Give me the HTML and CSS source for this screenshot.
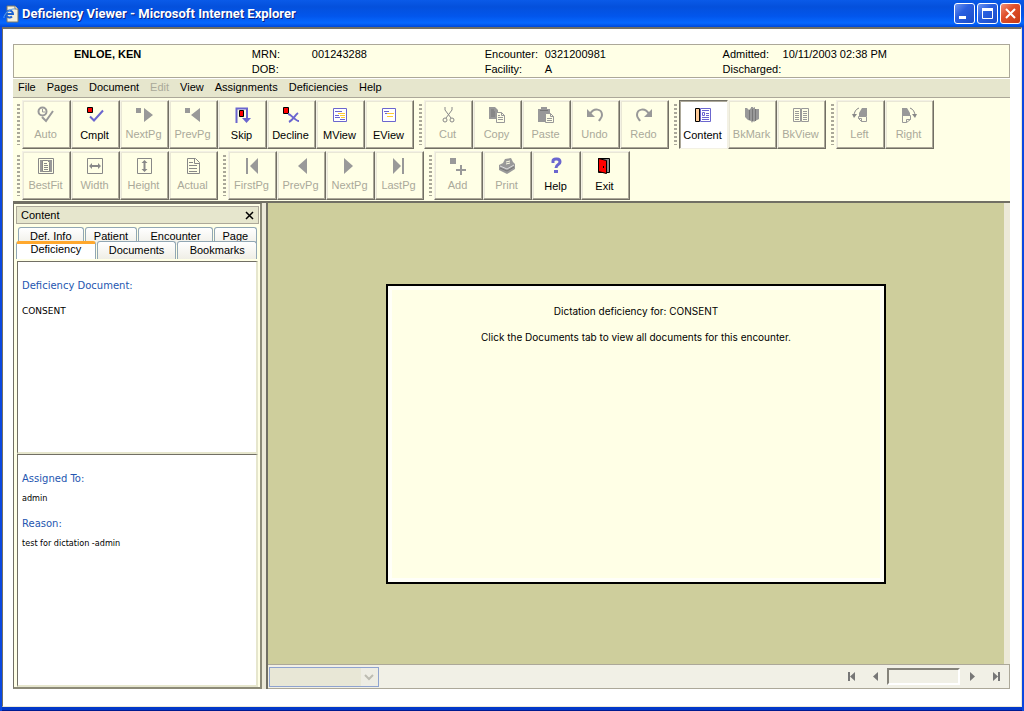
FILE: index.html
```html
<!DOCTYPE html>
<html lang="en">
<head>
    <meta charset="UTF-8">
    <meta name="viewport" content="width=device-width, initial-scale=1.0">
    <title>Deficiency Viewer</title>
    <link rel="stylesheet" href="styles.css">
</head>
<body>

    <!-- Title Bar -->
    <header class="titlebar">
        <svg class="app-icon" width="16" height="18" viewBox="0 0 16 18">
            <path d="M4 1h8l3 3v13H4z" fill="#f4f0dc" stroke="#7d7868"/>
            <path d="M12 1v3h3" fill="#fff" stroke="#7d7868"/>
            <path d="M3 9h7a3.500 3.500 0 1 0-1 2.500" fill="none" stroke="#1c62d0" stroke-width="2"/>
            <path d="M1 13C0 10 7 3 12 4" fill="none" stroke="#5ba0ee"/>
        </svg>
        <h1>Deficiency Viewer - Microsoft Internet Explorer</h1>
        <div class="window-buttons">
            <button class="win-btn" aria-label="Minimize"><svg width="19" height="19"><path d="M4 12h7v3H4z" fill="#fff"/></svg></button>
            <button class="win-btn" aria-label="Maximize"><svg width="19" height="19"><path d="M4.500 4v10.500h10V4" fill="none" stroke="#fff"/><path d="M4 4h11v3H4z" fill="#fff"/></svg></button>
            <button class="win-btn win-close" aria-label="Close"><svg width="19" height="19"><path d="M5 5l9 9M14 5l-9 9" stroke="#fff" stroke-width="2"/></svg></button>
        </div>
    </header>

    <div class="window-body">

        <!-- Patient Info -->
        <section class="patient">
            <strong class="patient-name">ENLOE, KEN</strong>
            <dl>
                <dt>MRN:</dt><dd>001243288</dd>
                <dt>DOB:</dt><dd></dd>
            </dl>
            <dl>
                <dt>Encounter:</dt><dd>0321200981</dd>
                <dt>Facility:</dt><dd>A</dd>
            </dl>
            <dl>
                <dt>Admitted:</dt><dd>10/11/2003 02:38 PM</dd>
                <dt>Discharged:</dt><dd></dd>
            </dl>
        </section>

        <!-- Menu -->
        <nav class="menu">
            <button>File</button>
            <button>Pages</button>
            <button>Document</button>
            <button disabled>Edit</button>
            <button>View</button>
            <button>Assignments</button>
            <button>Deficiencies</button>
            <button>Help</button>
        </nav>

        <!-- Toolbars -->
        <div class="toolbars">
            <div class="toolbar-row">
                <div class="toolbar">
                    <span class="grip"></span>
                    <button class="tool" disabled><svg class="icon" viewBox="0 0 23 22"><circle cx="7.500" cy="6.500" r="4" fill="none" stroke="#999" stroke-width="2"/><path d="M7.500 4v3H10" fill="none" stroke="#999"/><path d="M7 12l4 4 7-10" fill="none" stroke="#999" stroke-width="2"/></svg>Auto</button>
                    <button class="tool"><svg class="icon" viewBox="0 0 23 22"><path d="M3.500 2.500h5v5h-5z" fill="#f00" stroke="#000"/><path d="M6 11.500l4 4 9-10" fill="none" stroke="#6b66cf" stroke-width="2"/></svg>Cmplt</button>
                    <button class="tool" disabled><svg class="icon" viewBox="0 0 23 22"><path d="M3 3h5v5H3zM11 3l9 7-9 7z" fill="#999"/></svg>NextPg</button>
                    <button class="tool" disabled><svg class="icon" viewBox="0 0 23 22"><path d="M3 3h5v5H3zM18 3l-9 7 9 7z" fill="#999"/></svg>PrevPg</button>
                    <button class="tool"><svg class="icon" viewBox="0 0 23 22"><path d="M5.500 18V3.500H16V14" fill="none" stroke="#6b66cf" stroke-width="2"/><path d="M11 13h9l-4.500 5z" fill="#6b66cf"/><path d="M8.500 5.500h4v6h-4z" fill="#f00" stroke="#000"/></svg>Skip</button>
                    <button class="tool"><svg class="icon" viewBox="0 0 23 22"><path d="M3.500 2.500h5v6h-5z" fill="#f00" stroke="#000"/><path d="M8 9c3 0 7 7 11 7M18 8c-3 2-5 7-9 9" fill="none" stroke="#6b66cf" stroke-width="2"/></svg>Decline</button>
                    <button class="tool"><svg class="icon" viewBox="0 0 23 22"><path d="M4.500 3.500h13v13h-13z" fill="#fff" stroke="#6b66cf"/><path d="M6 6.500h7M6 10.500h4M6 12.500h5M11 14.500h5" stroke="#6b66cf"/><path d="M9 8.500h7M11 10.500h5M12 12.500h4" stroke="#fc3"/></svg>MView</button>
                    <button class="tool"><svg class="icon" viewBox="0 0 23 22"><path d="M4.500 3.500h13v13h-13z" fill="#fff" stroke="#6b66cf"/><path d="M6 6.500h5M7 8.500h3" stroke="#6b66cf"/><path d="M9 8.500h7M9 11.500h6" stroke="#fc3"/></svg>EView</button>
                </div>
                <div class="toolbar">
                    <span class="grip"></span>
                    <button class="tool" disabled><svg class="icon" viewBox="0 0 23 22"><path d="M8 2v3l6 8M15 2v3l-6 8" fill="none" stroke="#888"/><circle cx="8" cy="15" r="2" fill="none" stroke="#888"/><circle cx="15" cy="15" r="2" fill="none" stroke="#888"/></svg>Cut</button>
                    <button class="tool" disabled><svg class="icon" viewBox="0 0 23 22"><path d="M3 2h6l3 3v9H3z" fill="#999"/><path d="M5 5h3M5 7h4M5 9h4M5 11h4" stroke="#777"/><path d="M10.500 7.500h5l3 3v7h-8z" fill="#ffffe6" stroke="#999"/><path d="M15.500 7.500v3h3M12 12.500h5M12 14.500h5M12 10.500h2" fill="none" stroke="#999"/></svg>Copy</button>
                    <button class="tool" disabled><svg class="icon" viewBox="0 0 23 22"><path d="M3 4h3V2h6v2h3v13H3z" fill="#999"/><path d="M5 5.500h8" stroke="#777"/><path d="M10.500 8.500h5l3 3v6h-8z" fill="#ffffe6" stroke="#999"/><path d="M15.500 8.500v3h3M12 13.500h5M12 15.500h5" fill="none" stroke="#999"/></svg>Paste</button>
                    <button class="tool" disabled><svg class="icon" viewBox="0 0 23 22"><path d="M6 9c4-7 12-5 12 1 0 3-2 4-3 6" fill="none" stroke="#999" stroke-width="2"/><path d="M3 4v8h8z" fill="#999"/></svg>Undo</button>
                    <button class="tool" disabled><svg class="icon" viewBox="0 0 23 22"><path d="M16 9C12 2 4 4 4 10c0 3 2 4 3 6" fill="none" stroke="#999" stroke-width="2"/><path d="M19 4v8h-8z" fill="#999"/></svg>Redo</button>
                </div>
                <div class="toolbar">
                    <span class="grip"></span>
                    <button class="tool pressed" aria-pressed="true"><svg class="icon" viewBox="0 0 23 22"><path d="M3.500 3.500h4v13h-4z" fill="#fc9" stroke="#000"/><path d="M8.500 3.500h10v13h-10z" fill="#fff" stroke="#6b66cf"/><path d="M10 5.500h7M14 8.500h3M14 10.500h3M10 12.500h7M10 14.500h7" stroke="#6b66cf"/><path d="M10.500 7.500h2v3h-2z" fill="none" stroke="#6b66cf"/></svg>Content</button>
                    <button class="tool" disabled><svg class="icon" viewBox="0 0 23 22"><path d="M4 3h2l2 2 2-2v-1h2v1l2-1v2h4v10l-4 2-1 1-1-1-1 2-1-2-3-1-3-3z" fill="#999"/><path d="M8.500 5v10M11.500 4v12M14.500 4v12" stroke="#777"/></svg>BkMark</button>
                    <button class="tool" disabled><svg class="icon" viewBox="0 0 23 22"><path d="M3.500 3.500h7v13h-7zM11.500 3.500h7v13h-7z" fill="none" stroke="#999"/><path d="M5 6.500h4M5 8.500h4M5 10.500h4M5 12.500h4M5 14.500h4M13 6.500h4M13 8.500h4M13 10.500h4M13 12.500h4M13 14.500h4" stroke="#999"/></svg>BkView</button>
                </div>
                <div class="toolbar">
                    <span class="grip"></span>
                    <button class="tool" disabled><svg class="icon" viewBox="0 0 23 22"><path d="M18 3v8h-8V8l3-5z" fill="#999"/><path d="M9.500 11.500h8v5h-5l-3-3zM12.500 16.500v-3h-3" fill="none" stroke="#999"/><path d="M10 3C7 4 5 7 5 11" fill="none" stroke="#888"/><path d="M3 9h5l-3 4z" fill="#888"/></svg>Left</button>
                    <button class="tool" disabled><svg class="icon" viewBox="0 0 23 22"><path d="M4 3h5l3 5v3H4z" fill="#999"/><path d="M4.500 10.500v7h4l4-3v-4zM8.500 17.500v-3h4" fill="none" stroke="#999"/><path d="M12 3c3 1 5 4 5 8" fill="none" stroke="#888"/><path d="M14 9h5l-2 4z" fill="#888"/></svg>Right</button>
                </div>
            </div>

            <div class="toolbar-row">
                <div class="toolbar">
                    <span class="grip"></span>
                    <button class="tool" disabled><svg class="icon" viewBox="0 0 23 22"><path d="M3.500 2.500h15v15h-15z" fill="none" stroke="#888"/><path d="M5 4h12v12H5z" fill="#999"/><path d="M7.500 4.500h5l2 2v9h-7z" fill="#ffffe6" stroke="#888"/><path d="M9 7.500h3M9 9.500h4M9 11.500h4M9 13.500h4" stroke="#888"/></svg>BestFit</button>
                    <button class="tool" disabled><svg class="icon" viewBox="0 0 23 22"><path d="M3.500 2.500h15v15h-15z" fill="none" stroke="#888"/><path d="M7 10h8" stroke="#888" stroke-width="2"/><path d="M5 10l3-3v6zM17 10l-3-3v6z" fill="#888"/></svg>Width</button>
                    <button class="tool" disabled><svg class="icon" viewBox="0 0 23 22"><path d="M4.500 2.500h14v15h-14z" fill="none" stroke="#888"/><path d="M11.500 6v8" stroke="#888" stroke-width="2"/><path d="M11.500 4l-3 3h6zM11.500 16l-3-3h6z" fill="#888"/></svg>Height</button>
                    <button class="tool" disabled><svg class="icon" viewBox="0 0 23 22"><path d="M5.500 2.500h8l4 4v11h-12zM12.500 2.500v5h5" fill="none" stroke="#888" stroke-width="1"/><path d="M7 6.500h4M7 9.500h8M7 12.500h8M7 15.500h8" stroke="#888"/></svg>Actual</button>
                </div>
                <div class="toolbar">
                    <span class="grip"></span>
                    <button class="tool" disabled><svg class="icon" viewBox="0 0 23 22"><path d="M5 2h2v16H5zM17 2v16l-8-8z" fill="#999"/></svg>FirstPg</button>
                    <button class="tool" disabled><svg class="icon" viewBox="0 0 23 22"><path d="M17 2v16l-9-8z" fill="#999"/></svg>PrevPg</button>
                    <button class="tool" disabled><svg class="icon" viewBox="0 0 23 22"><path d="M5 2v16l9-8z" fill="#999"/></svg>NextPg</button>
                    <button class="tool" disabled><svg class="icon" viewBox="0 0 23 22"><path d="M5 2v16l8-8zM14 2h2v16h-2z" fill="#999"/></svg>LastPg</button>
                </div>
                <div class="toolbar">
                    <span class="grip"></span>
                    <button class="tool" disabled><svg class="icon" viewBox="0 0 23 22"><path d="M3 2h6v6H3zM13 9h2v4h4v2h-4v4h-2v-4H9v-2h4z" fill="#999"/></svg>Add</button>
                    <button class="tool" disabled><svg class="icon" viewBox="0 0 23 22"><path d="M9 3l6-1 2 4 2 2v5l-8 5-8-4V9l4-2z" fill="#999"/><path d="M10 6l4-1M10 8l4-1" stroke="#ffffe6"/><path d="M4 10l7 3 7-4" fill="none" stroke="#ddd"/><path d="M4 12l7 3 7-4" fill="none" stroke="#777"/></svg>Print</button>
                    <button class="tool"><svg class="icon" viewBox="0 0 23 22"><path d="M8 7V5c0-1 1-2 3-2h1c2 0 3 1 3 3 0 3-4 2-4 6" fill="none" stroke="#6b66cf" stroke-width="3"/><path d="M9 14h4v3H9z" fill="#6b66cf"/></svg>Help</button>
                    <button class="tool"><svg class="icon" viewBox="0 0 23 22"><path d="M4.500 2.500h11v14h-11z" fill="#888" stroke="#000"/><path d="M4.500 2.500l8 2v13l-8-2z" fill="#f00" stroke="#000"/><path d="M9 10h1v2H9z" fill="#000"/></svg>Exit</button>
                </div>
            </div>
        </div>

        <main class="workspace">

            <!-- Content Panel -->
            <aside class="panel">
                <div class="panel-title">
                    <h2>Content</h2>
                    <button class="panel-close" aria-label="Close panel"><svg width="9" height="9"><path d="M1 1l7 7M8 1l-7 7" stroke="#000" stroke-width="1.500"/></svg></button>
                </div>
                <div class="tabs tabs-back">
                    <button class="tab-btn tab-info">Def. Info</button>
                    <button class="tab-btn tab-patient">Patient</button>
                    <button class="tab-btn tab-encounter">Encounter</button>
                    <button class="tab-btn tab-page">Page</button>
                </div>
                <div class="tabs tabs-front">
                    <button class="tab-btn active">Deficiency</button>
                    <button class="tab-btn">Documents</button>
                    <button class="tab-btn">Bookmarks</button>
                </div>
                <section class="pane pane-document">
                    <h3>Deficiency Document:</h3>
                    <p>CONSENT</p>
                </section>
                <section class="pane pane-assigned">
                    <h3>Assigned To:</h3>
                    <p>admin</p>
                    <h3>Reason:</h3>
                    <p>test for dictation -admin</p>
                </section>
            </aside>

            <!-- Document Viewer -->
            <section class="viewer">
                <div class="canvas">
                    <article class="message">
                        <p>Dictation deficiency for: CONSENT</p>
                        <p>Click the Documents tab to view all documents for this encounter.</p>
                    </article>
                </div>
                <footer class="statusbar">
                    <div class="select-wrap">
                        <select class="zoom-select" aria-label="Zoom" disabled><option></option></select>
                        <svg class="select-arrow" width="17" height="18"><path d="M4 7l4 4 4-4" fill="none" stroke="#bdbcb2" stroke-width="2"/></svg>
                    </div>
                    <div class="pager">
                        <button aria-label="First page"><svg width="9" height="9"><path d="M1 0h2v9H1zM8 0v9L3 4.500z" fill="#777"/></svg></button>
                        <button aria-label="Previous page"><svg width="9" height="9"><path d="M7 0v9L2 4.500z" fill="#777"/></svg></button>
                        <input type="text" aria-label="Page number">
                        <button aria-label="Next page"><svg width="9" height="9"><path d="M2 0v9l5-4.500z" fill="#777"/></svg></button>
                        <button aria-label="Last page"><svg width="9" height="9"><path d="M1 0v9l5-4.500zM6 0h2v9H6z" fill="#777"/></svg></button>
                    </div>
                </footer>
            </section>
        </main>
    </div>

</body>
</html>
```
FILE: styles.css
```css
* {
    box-sizing: border-box;
}

body {
    margin: 0;
    height: 100vh;
    display: flex;
    flex-direction: column;
    font-family: "Liberation Sans", Arial, sans-serif;
    font-size: 11px;
    color: #000;
    background: #0a48e0;
}

h1, h2, h3, p, dl, dd {
    margin: 0;
    font-size: inherit;
    font-weight: normal;
}

button, input, select {
    font-family: inherit;
    font-size: inherit;
    color: inherit;
    margin: 0;
    padding: 0;
}

/* Title Bar */
.titlebar {
    display: flex;
    align-items: center;
    height: 27px;
    padding: 0 3px;
    background: linear-gradient(#0a5ae8, #0450dc 25%, #0256ec 60%, #0668ff 85%, #0048d8);
}

.titlebar h1 {
    flex: 1;
    margin-left: 3px;
    font-family: Roboto, "Trebuchet MS", sans-serif;
    font-size: 13px;
    font-weight: bold;
    color: #fff;
    text-shadow: 1px 1px #0b1f80;
}

.window-buttons {
    display: flex;
    gap: 2px;
}

.win-btn {
    width: 21px;
    height: 21px;
    border: 1px solid #fff;
    border-radius: 3px;
    background: linear-gradient(135deg, #6d94f0, #2a5fe0 40%, #1b4cc8);
}

.win-btn svg {
    display: block;
}

.win-close {
    background: linear-gradient(135deg, #f0937a, #e0502c 40%, #c83a14);
}

.window-body {
    flex: 1;
    display: flex;
    flex-direction: column;
    min-height: 0;
    margin: 0 2px 4px;
    padding: 15px 11px 17px 10px;
    background: #fff;
    border: 1px solid #ece9d8;
    border-top: 2px solid #716f64;
    border-left-color: #716f64;
    box-shadow: 0 3px #0338c8, 0 4px #001a90;
}

/* Patient Info */
.patient {
    display: grid;
    grid-template-columns: 240fr 235fr 240fr 289fr;
    padding: 2px 0 0;
    line-height: 15px;
    background: #ffffe6;
    border: 1px solid #aca899;
}

.patient-name {
    padding-left: 60px;
}

.patient dl {
    display: grid;
    grid-template-columns: 60px 1fr;
    grid-auto-rows: 15px;
}

/* Menu */
.menu {
    display: flex;
    gap: 11px;
    height: 19px;
    padding: 0 0 2px 5px;
    background: #e6e6cd;
    border-top: 1px solid #fff;
}

.menu button {
    border: none;
    background: none;
}

.menu button:disabled {
    color: #aaa99a;
}

/* Toolbars */
.toolbars {
    display: flex;
    flex-direction: column;
    gap: 2px;
    padding: 2px 0 1px;
    background: #ffffe6;
    border-top: 1px solid #aca899;
    border-bottom: 2px solid #716f64;
}

.toolbar-row {
    display: flex;
    gap: 1px;
}

.toolbar {
    display: flex;
}

.grip {
    width: 9px;
    margin: 4px 0;
    background: linear-gradient(#aaa899 2px, transparent 2px) 4px 0 / 3px 4px repeat-y;
}

.tool {
    display: flex;
    flex-direction: column;
    align-items: center;
    width: 49px;
    height: 49px;
    padding: 4px 2px 0 0;
    line-height: 14px;
    background: #ffffe6;
    border: 1px solid;
    border-color: #f3f1e4 #716f64 #716f64 #f3f1e4;
    box-shadow: inset -1px -1px #aca899, inset 1px 1px #e9e7d6;
}

.tool:disabled {
    color: #aaa99a;
}

.tool:enabled {
    line-height: 16px;
}

.tool.pressed {
    background: #fff;
    border-color: #716f64 #f3f1e4 #f3f1e4 #716f64;
    box-shadow: inset 1px 1px #aca899;
}

.icon {
    display: block;
    width: 23px;
    height: 22px;
    flex: none;
    margin-left: 2px;
}

/* Workspace */
.workspace {
    flex: 1;
    display: flex;
    gap: 4px;
    min-height: 0;
    background: #ece9d8;
}

.panel {
    width: 249px;
    display: flex;
    flex-direction: column;
    padding: 2px 1px 0 2px;
    background: #ffffe6;
    border: 1px solid #716f64;
    border-right: 2px solid #8c8a78;
    border-bottom: 2px solid #8c8a78;
}

.panel-title {
    display: flex;
    align-items: center;
    justify-content: space-between;
    height: 18px;
    padding: 0 4px;
    background: #e6e6cd;
    border: 1px solid #aca899;
}

.panel-close {
    border: none;
    background: none;
}

.panel-close svg {
    display: block;
}

/* Tabs */
.tabs {
    display: flex;
    gap: 1px;
}

.tabs-back {
    height: 14px;
    margin: 3px 2px 0;
}

.tabs-front {
    height: 18px;
    margin-right: 2px;
}

.tab-btn {
    flex: 1;
    height: 18px;
    line-height: 17px;
    background: linear-gradient(#fff, #efeee6);
    border: 1px solid #91a7b4;
    border-bottom: none;
    border-radius: 3px 3px 0 0;
}

.tab-info {
    flex: 66;
}

.tab-patient {
    flex: 53;
}

.tab-encounter {
    flex: 75;
}

.tab-page {
    flex: 43;
}

.tabs-front .tab-btn {
    z-index: 1;
}

.tabs-front .active {
    padding-bottom: 4px;
    line-height: 11px;
    background: #fff;
    border-top: 3px solid #ffa82e;
}

/* Panes */
.pane {
    margin: 0 1px;
    font-family: "DejaVu Sans", Verdana, sans-serif;
    font-size: 9px;
    padding: 0 4px;
    background: #fff;
    border: 1px solid #716f64;
    border-right: 2px solid #e6e6cd;
    border-bottom: 2px solid #e6e6cd;
}

.pane h3 {
    font-size: 10px;
    color: #2456b0;
    line-height: 14px;
}

.pane p {
    line-height: 14px;
}

.pane-document {
    flex: 189;
    margin-top: 2px;
    padding-top: 17px;
}

.pane-document h3 {
    margin-bottom: 11px;
}

.pane-assigned {
    flex: 233;
    padding-top: 17px;
}

.pane-assigned h3 {
    margin-bottom: 5px;
}

.pane-assigned p {
    margin-bottom: 12px;
    font-family: "DejaVu Sans Condensed", Tahoma, sans-serif;
}

/* Viewer */
.viewer {
    flex: 1;
    display: flex;
    flex-direction: column;
    border-left: 2px solid #716f64;
}

.canvas {
    flex: 1;
    display: flex;
    align-items: center;
    justify-content: center;
    margin-right: 6px;
    background: #cece9c;
}

.message {
    width: 500px;
    height: 300px;
    padding: 16px 0;
    font-family: Inter, Verdana, sans-serif;
    font-size: 10px;
    line-height: 14px;
    text-align: center;
    background: #ffffe6;
    border: 2px solid #000;
    box-shadow: inset 0 0 0 4px #fffff8;
}

.message p {
    margin: 2px 0 12px;
}

.statusbar {
    display: flex;
    align-items: center;
    justify-content: space-between;
    height: 25px;
    padding-left: 1px;
    background: #f1f0e6;
    border: 1px solid #aca899;
    border-left: none;
}

.select-wrap {
    position: relative;
    width: 110px;
    height: 20px;
}

.zoom-select {
    appearance: none;
    display: block;
    width: 100%;
    height: 100%;
    background: #e8e7d6;
    border: 1px solid #8fa3cf;
    opacity: 1;
}

.select-arrow {
    position: absolute;
    top: 1px;
    right: 1px;
    background: #eeede4;
}

/* Pager */
.pager {
    display: flex;
    align-items: center;
    gap: 8px;
    padding-right: 5px;
}

.pager button {
    width: 16px;
    height: 16px;
    border: none;
    background: none;
}

.pager svg {
    display: block;
    margin: auto;
}

.pager input {
    width: 73px;
    height: 17px;
    margin: 0 -4px;
    background: #f1f0e6;
    border: 2px solid;
    border-color: #85837a #fff #fff #85837a;
}
```
